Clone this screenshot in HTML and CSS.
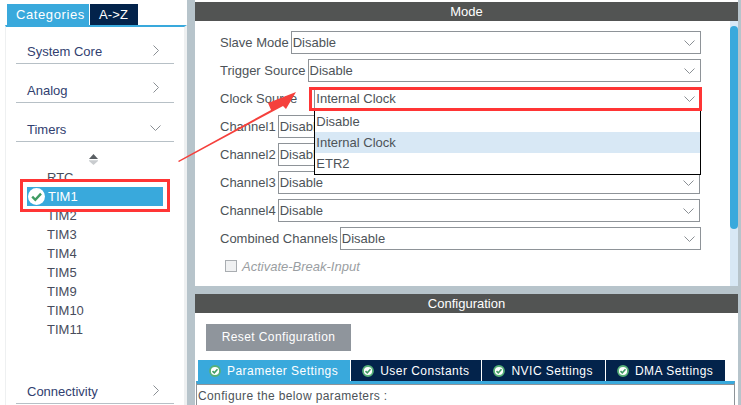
FILE: index.html
```html
<!DOCTYPE html>
<html>

<head>
  <title>Timers - TIM1 Mode and Configuration</title>
  <link rel="stylesheet" href="styles.css">
</head>

<body>
  <svg class="defs" width="0" height="0">
    <symbol id="chevron-down" viewBox="0 0 11 6"><path d="M0.5 0.5 L5.5 5.5 L10.5 0.5" fill="none" stroke="#8a8f94" stroke-width="1"/></symbol>
    <symbol id="chevron-right" viewBox="0 0 6 11"><path d="M0.5 0.5 L5.5 5.5 L0.5 10.5" fill="none" stroke="#8a8f94" stroke-width="1"/></symbol>
    <symbol id="tab-check" viewBox="0 0 12 12"><circle cx="6" cy="6" r="5" fill="#fff" stroke="#57b078" stroke-width="1.8"/><path d="M3.5 6.1 L5.3 7.8 L8.5 4.3" fill="none" stroke="#3f9c63" stroke-width="1.6"/></symbol>
  </svg>

  <div class="page">
    <aside class="side">
      <div class="side-tabs">
        <div class="side-tab side-tab-active">Categories</div>
        <div class="side-tab">A-&gt;Z</div>
      </div>
      <div class="side-body">
        <div class="cat cat-first">System Core <svg class="chev-right"><use href="#chevron-right"/></svg></div>
        <div class="cat">Analog <svg class="chev-right"><use href="#chevron-right"/></svg></div>
        <div class="cat">Timers <svg class="chev-down"><use href="#chevron-down"/></svg></div>

        <div class="sort">
          <svg width="9" height="11" viewBox="0 0 9 11">
            <path d="M4.5 0 L9 5 H0 Z" fill="#5a5f63"/>
            <path d="M0 6 H9 V7 H0 Z" fill="#d5d8da"/>
            <path d="M0 7 H9 L4.5 11 Z" fill="#c9cccf"/>
          </svg>
        </div>

        <ul class="peripherals">
          <li>RTC</li>
          <li class="selected">
            <svg class="selected-check" width="17" height="17" viewBox="0 0 17 17">
              <circle cx="8.5" cy="8.5" r="8.5" fill="#fff"/>
              <path d="M4.2 8.6 L7.3 11.8 L13 5.6" fill="none" stroke="#3f9c63" stroke-width="2.4"/>
            </svg>
            TIM1
          </li>
          <li>TIM2</li>
          <li>TIM3</li>
          <li>TIM4</li>
          <li>TIM5</li>
          <li>TIM9</li>
          <li>TIM10</li>
          <li>TIM11</li>
        </ul>

        <div class="cat cat-last">Connectivity <svg class="chev-right"><use href="#chevron-right"/></svg></div>
      </div>
    </aside>

    <main class="main">
      <h2 class="panel-title">Mode</h2>
      <section class="mode">
        <div class="mode-form">
          <div class="row">
            <label>Slave Mode</label>
            <div class="select">Disable <svg class="chev-select"><use href="#chevron-down"/></svg></div>
          </div>
          <div class="row">
            <label>Trigger Source</label>
            <div class="select">Disable <svg class="chev-select"><use href="#chevron-down"/></svg></div>
          </div>
          <div class="row">
            <label>Clock Source</label>
            <div class="select select-open">
              Internal Clock <svg class="chev-select"><use href="#chevron-down"/></svg>
              <ul class="dropdown">
                <li>Disable</li>
                <li class="hover">Internal Clock</li>
                <li>ETR2</li>
              </ul>
            </div>
          </div>
          <div class="row row-short">
            <label>Channel1</label>
            <div class="select">Disable <svg class="chev-select"><use href="#chevron-down"/></svg></div>
          </div>
          <div class="row row-short">
            <label>Channel2</label>
            <div class="select">Disable <svg class="chev-select"><use href="#chevron-down"/></svg></div>
          </div>
          <div class="row row-short">
            <label>Channel3</label>
            <div class="select">Disable <svg class="chev-select"><use href="#chevron-down"/></svg></div>
          </div>
          <div class="row row-short">
            <label>Channel4</label>
            <div class="select">Disable <svg class="chev-select"><use href="#chevron-down"/></svg></div>
          </div>
          <div class="row">
            <label>Combined Channels</label>
            <div class="select">Disable <svg class="chev-select"><use href="#chevron-down"/></svg></div>
          </div>
          <div class="check-row">
            <span class="checkbox"></span>
            <em>Activate-Break-Input</em>
          </div>
        </div>
        <div class="scrollbar"><div class="scroll-thumb"></div></div>
      </section>

      <h2 class="panel-title">Configuration</h2>
      <section class="config">
        <div class="reset">Reset Configuration</div>
        <div class="tabs">
          <div class="tab tab-active"><svg class="tab-icon"><use href="#tab-check"/></svg>Parameter Settings</div>
          <div class="tab"><svg class="tab-icon"><use href="#tab-check"/></svg>User Constants</div>
          <div class="tab"><svg class="tab-icon"><use href="#tab-check"/></svg>NVIC Settings</div>
          <div class="tab"><svg class="tab-icon"><use href="#tab-check"/></svg>DMA Settings</div>
        </div>
        <div class="tab-box">Configure the below parameters :</div>
      </section>
    </main>

    <!-- red marks drawn over the screenshot -->
    <div class="mark mark-tim"></div>
    <div class="mark mark-clock"></div>
    <svg class="mark-arrow" width="130" height="80" viewBox="0 0 130 80">
      <polygon points="7,75 100,24 97,17 125,6 115,23 112,20 8,76" fill="#f5403c"/>
    </svg>
  </div>
</body>

</html>
```

FILE: styles.css
```css
* {
  box-sizing: border-box;
}

body {
  margin: 0;
  font-family: "Liberation Sans", Arial, sans-serif;
  font-size: 13px;
  color: #4d5358;
}

.defs {
  position: absolute;
}

.page {
  position: relative;
  display: flex;
  width: 741px;
  height: 405px;
  overflow: hidden;
  background-color: #b7c4cb;
}

/* left column */
.side {
  width: 187px;
  flex-shrink: 0;
  background-color: #fff;
}

.side-tabs {
  display: flex;
  gap: 1px;
  height: 25px;
  padding: 4px 0 0 7px;
}

.side-tab {
  width: 48px;
  padding-left: 9px;
  line-height: 21px;
  color: #fff;
  letter-spacing: 0.1px;
  background-color: #03234b;
}

.side-tab-active {
  width: 82px;
  letter-spacing: 0.6px;
  background-color: #39a9dc;
}

.side-body {
  height: 380px;
  margin-left: 5px;
  padding: 0 10px;
  background-color: #fff;
  border-top: 2px solid #39a9dc;
  border-left: 1px solid #eef0f1;
  border-right: 3px solid #eef0f1;
}

.cat {
  display: flex;
  justify-content: space-between;
  align-items: center;
  height: 39px;
  padding: 14px 15px 0 11px;
  color: #31406f;
  border-bottom: 1px solid #b7c0c6;
}

.cat-first {
  height: 37px;
  padding-top: 12px;
}

.cat-last {
  margin-top: 26px;
}

.chev-right {
  width: 6px;
  height: 11px;
  margin-top: -5px;
}

.cat-first .chev-right,
.cat-last .chev-right {
  margin-top: -2px;
}

.chev-down {
  width: 11px;
  height: 6px;
  margin-top: -3px;
  margin-right: -2px;
}

.sort {
  display: flex;
  justify-content: center;
  height: 26px;
  padding: 12px 0 0 2px;
  margin-right: 6px;
}

.peripherals {
  margin: 0;
  padding: 0;
  list-style: none;
  color: #474c5c;
}

.peripherals li {
  height: 19px;
  padding-left: 31px;
  line-height: 19px;
}

.peripherals .selected {
  display: flex;
  align-items: center;
  width: 136px;
  margin-left: 11px;
  padding-left: 1px;
  color: #fff;
  background-color: #39a9dc;
}

.selected-check {
  flex-shrink: 0;
  margin: 0 3px 0 0;
}

/* right column */
.main {
  width: 543px;
  margin-left: 8px;
  padding-top: 2px;
  background-color: #fff;
}

.panel-title {
  height: 19px;
  margin: 0;
  font-size: 13px;
  font-weight: normal;
  line-height: 19px;
  text-align: center;
  color: #fff;
  background-color: #525453;
}

.mode {
  display: flex;
  height: 265px;
  margin-bottom: 8px;
  box-shadow: 0 8px 0 #b7c4cb;
}

.mode-form {
  flex: 1;
  display: flex;
  flex-direction: column;
  gap: 5px;
  padding: 10px 29px 0 25px;
}

.row {
  display: flex;
  align-items: center;
  gap: 2px;
  height: 23px;
}

.row label {
  white-space: nowrap;
}

.row-short .select {
  margin-right: 1px;
}

.select {
  position: relative;
  flex: 1;
  display: flex;
  justify-content: space-between;
  align-items: center;
  height: 23px;
  padding: 0 5px 0 1px;
  background-color: #fff;
  border: 1px solid #8e9398;
}

.select-open {
  margin-left: 15px;
}

.chev-select {
  width: 11px;
  height: 6px;
}

.dropdown {
  position: absolute;
  top: 23px;
  left: -1px;
  right: -1px;
  z-index: 2;
  height: 64px;
  margin: 0;
  padding: 0;
  list-style: none;
  background-color: #fff;
  border: 1px solid #000;
  border-top: 0;
}

.dropdown li {
  height: 21px;
  padding-left: 1px;
  line-height: 21px;
}

.dropdown .hover {
  background-color: #d8e8f5;
}

.check-row {
  display: flex;
  align-items: center;
  gap: 5px;
  height: 14px;
  margin: 4px 0 0 5px;
  color: #9a9ea2;
}

.checkbox {
  width: 12px;
  height: 12px;
  background-color: #f0f1f2;
  border: 1px solid #a9adb1;
}

.scrollbar {
  width: 8px;
  padding-top: 5px;
  background-color: #d8e8f5;
}

.scroll-thumb {
  height: 203px;
  background-color: #39a9dc;
  border-radius: 4px;
}

.config {
  padding-top: 11px;
}

.reset {
  width: 145px;
  height: 27px;
  margin-left: 11px;
  font-size: 12px;
  line-height: 27px;
  text-align: center;
  color: #fff;
  letter-spacing: 0.4px;
  background-color: #8f959c;
}

.tabs {
  display: flex;
  gap: 1px;
  height: 21px;
  margin: 9px 0 0 3px;
}

.tab {
  display: flex;
  align-items: center;
  padding: 0 12px 0 11px;
  font-size: 12px;
  color: #fff;
  letter-spacing: 0.47px;
  white-space: nowrap;
  background-color: #03234b;
}

.tab-active {
  background-color: #39a9dc;
}

.tab-icon {
  width: 12px;
  height: 12px;
  margin-right: 6px;
}

.tab-box {
  width: 539px;
  height: 30px;
  margin-left: 1px;
  padding-left: 1px;
  font-size: 12px;
  line-height: 24px;
  color: #4d5358;
  letter-spacing: 0.38px;
  background-color: #fff;
  border: 1px solid #8e9398;
  border-top: 3px solid #39a9dc;
  box-shadow: inset 0 1px 0 #8e9398;
}

/* annotations over the page */
.mark {
  position: absolute;
  z-index: 3;
  border: 3px solid #ff3535;
}

.mark-tim {
  top: 179px;
  left: 20px;
  width: 150px;
  height: 33px;
}

.mark-clock {
  top: 87px;
  left: 309px;
  width: 393px;
  height: 24px;
}

.mark-arrow {
  position: absolute;
  z-index: 4;
  top: 86px;
  left: 171px;
}
```
